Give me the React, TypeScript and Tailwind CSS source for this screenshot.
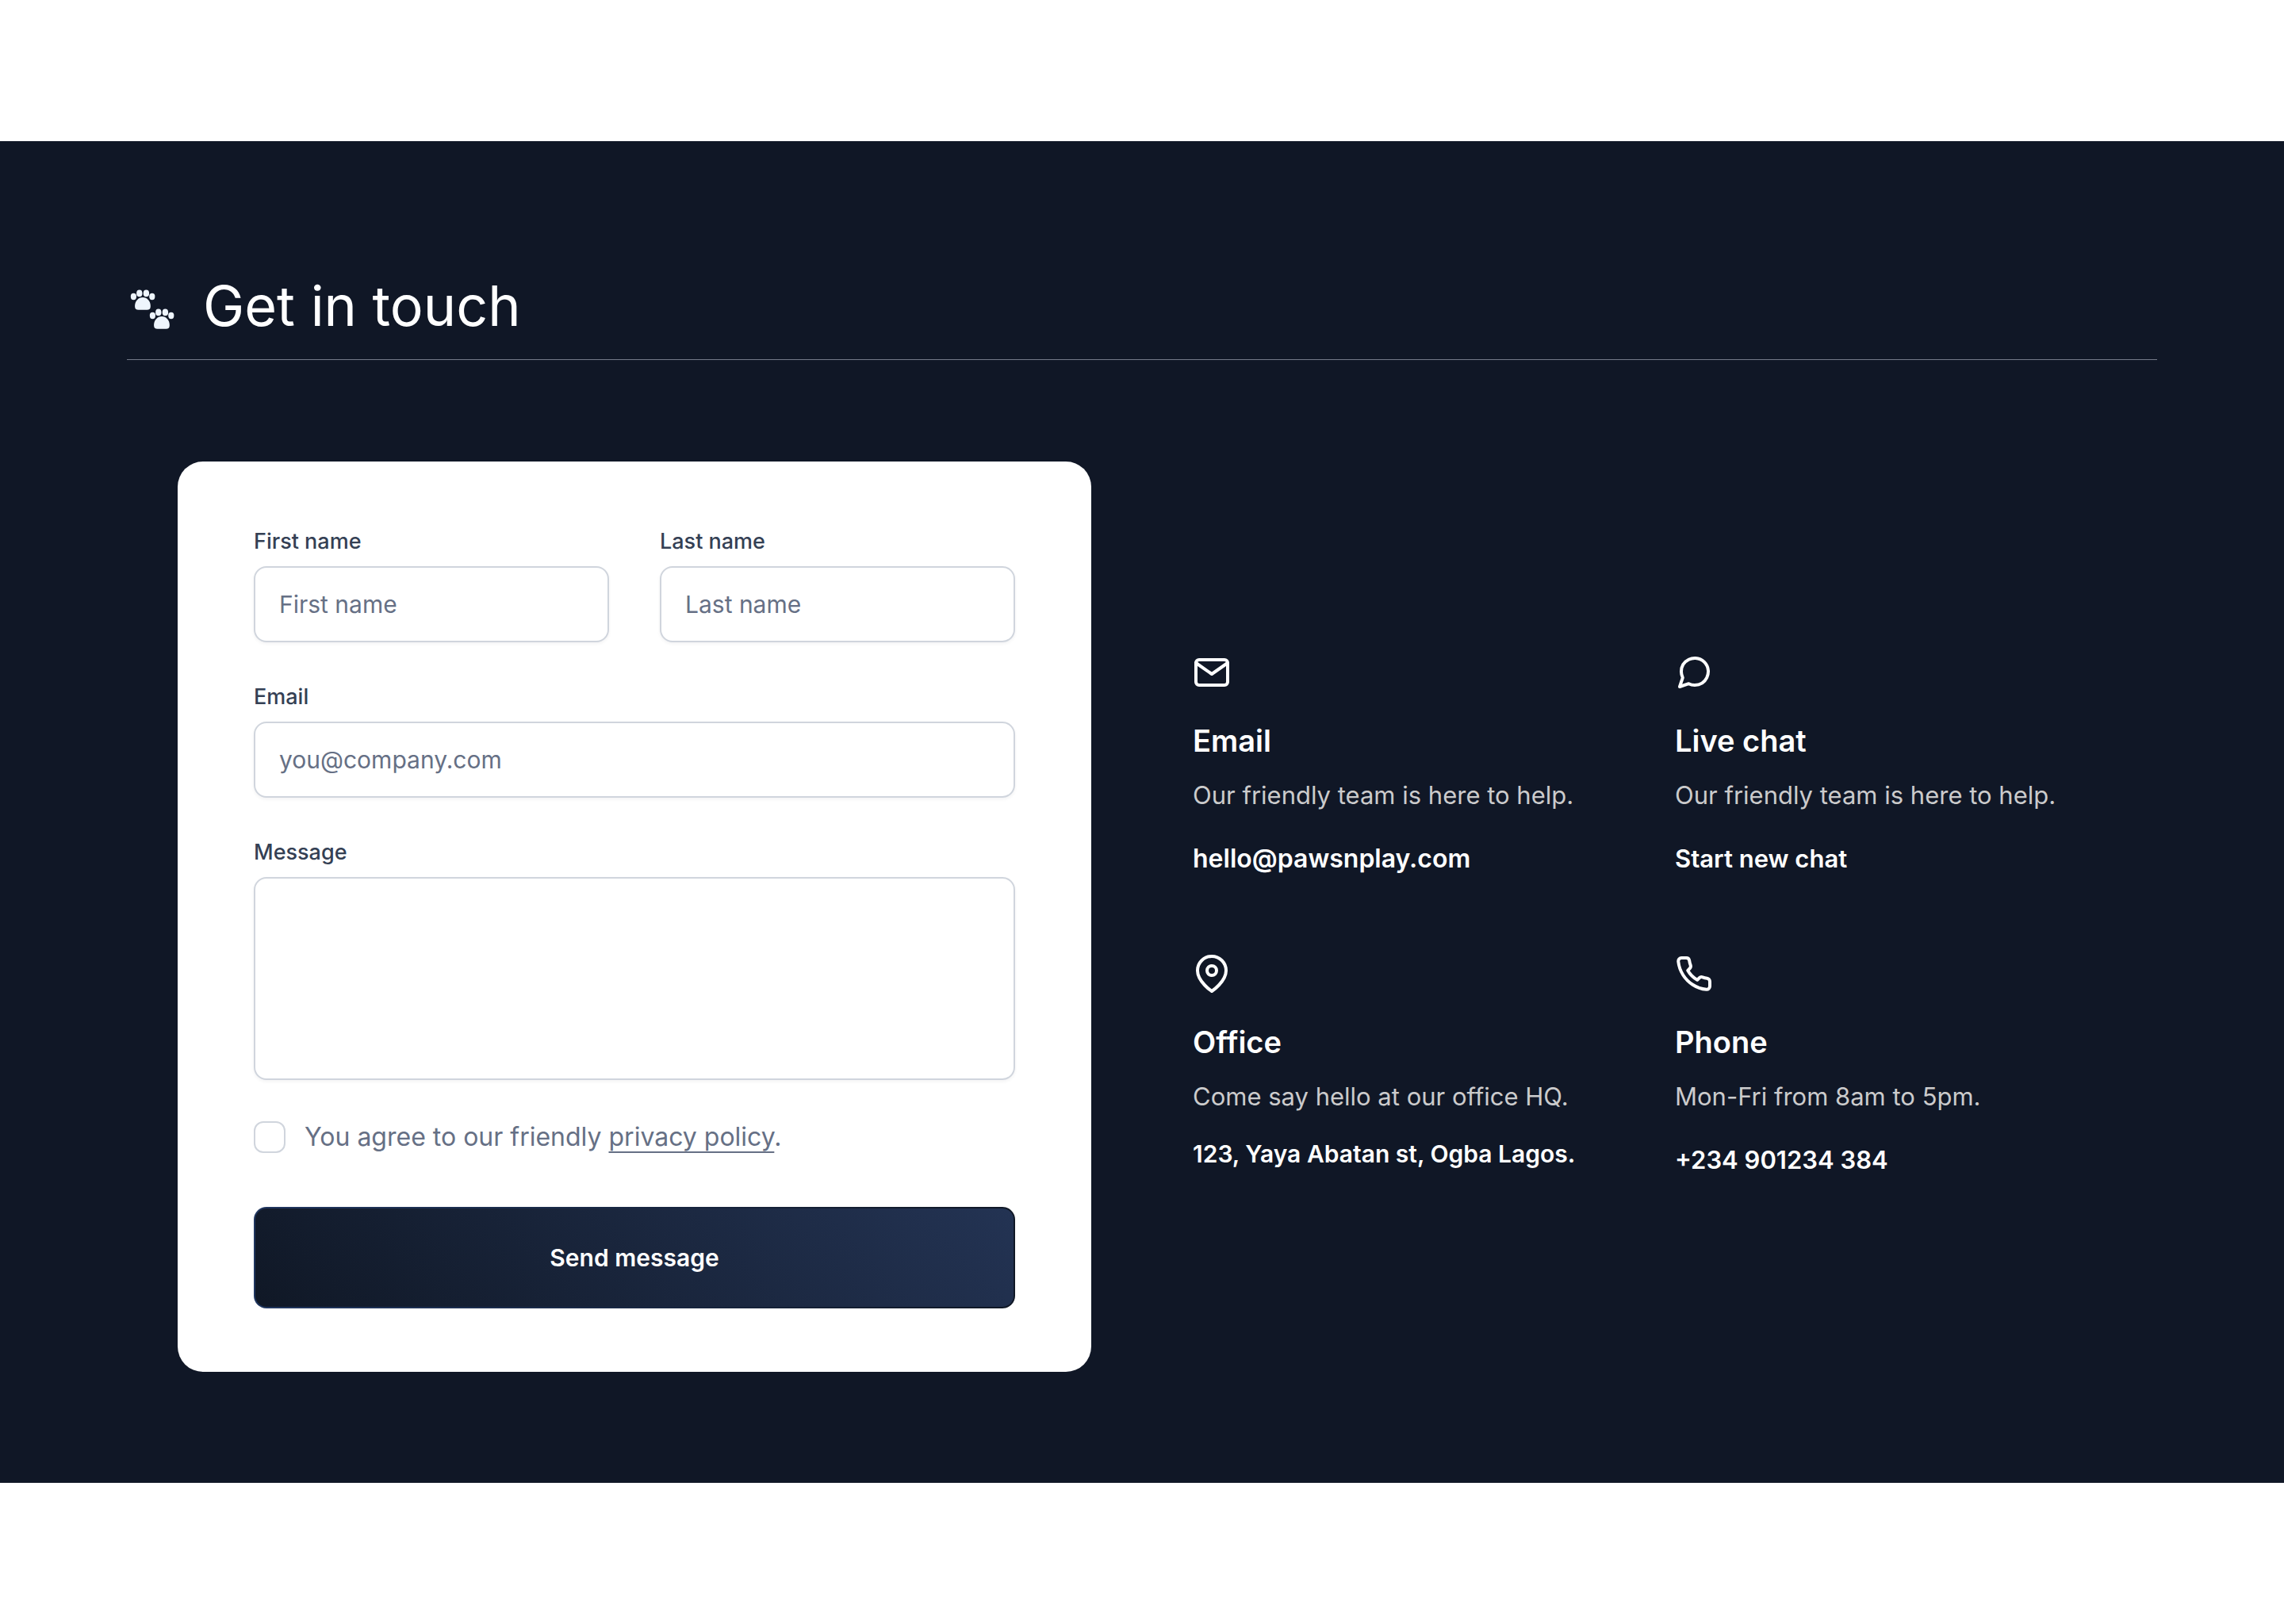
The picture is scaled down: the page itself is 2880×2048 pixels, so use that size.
import type { ReactNode } from "react";
import { FiMail, FiMapPin, FiMessageCircle, FiPhone } from "react-icons/fi";

const fieldClass =
  "block w-full rounded-2xl border-2 border-[#d0d5dd] bg-white px-[30px] text-[30px] leading-[48px] text-[#101828] placeholder:text-[#667085] placeholder:opacity-100 shadow-[0_2px_4px_rgba(16,24,40,0.05)] outline-none";

function Paws() {
  return (
    <svg viewBox="0 0 64 64" className="size-16 shrink-0 fill-[#eef5fd]" aria-hidden="true">
      {[0, 24].map((d) => (
        <g key={d} transform={`translate(${d} ${d})`}>
          <ellipse cx="8.4" cy="20" rx="3.6" ry="4.2" />
          <ellipse cx="15.8" cy="15.9" rx="3.7" ry="4.3" />
          <ellipse cx="24.4" cy="15.9" rx="3.7" ry="4.3" />
          <ellipse cx="31.8" cy="20" rx="3.6" ry="4.2" />
          <path d="M20 21c5.5 0 9.8 5 9.8 10.5v1c0 3-1.5 4.2-4.5 4.2H14.6c-3 0-4.5-1.2-4.5-4.2v-1C10.1 26 14.5 21 20 21z" />
        </g>
      ))}
    </svg>
  );
}

function Field({ id, label, children }: { id: string; label: string; children: ReactNode }) {
  return (
    <div className="flex flex-col gap-[10px]">
      <label htmlFor={id} className="text-[27px] font-medium leading-[42px] text-[#344054]">
        {label}
      </label>
      {children}
    </div>
  );
}

function Contact({
  icon,
  title,
  text,
  children,
}: {
  icon: ReactNode;
  title: string;
  text: string;
  children: ReactNode;
}) {
  return (
    <div className="flex flex-col items-start">
      {icon}
      <h3 className="mt-8 text-[38px] font-semibold leading-[60px] text-white">{title}</h3>
      <p className="mt-4 text-[31px] leading-[46px] text-[#cbcbcc]">{text}</p>
      {children}
    </div>
  );
}

export default function App() {
  return (
    <main className="flex min-h-screen flex-col justify-center bg-white font-['Inter',sans-serif]">
      <section className="bg-[#101726] px-40 pt-40 pb-[140px]">
        <header className="flex items-center gap-8 border-b border-[#747a89] pb-[19px]">
          <Paws />
          <h2 className="text-[70px] leading-[96px] text-white">Get in touch</h2>
        </header>

        <div className="mt-32 grid grid-cols-2 items-center gap-32 px-16">
          <form className="rounded-[32px] bg-white px-24 py-20" onSubmit={(e) => e.preventDefault()}>
            <div className="flex flex-col gap-12">
              <div className="grid grid-cols-2 gap-16">
                <Field id="first-name" label="First name">
                  <input id="first-name" type="text" placeholder="First name" className={`${fieldClass} h-24`} />
                </Field>
                <Field id="last-name" label="Last name">
                  <input id="last-name" type="text" placeholder="Last name" className={`${fieldClass} h-24`} />
                </Field>
              </div>
              <Field id="email" label="Email">
                <input id="email" type="email" placeholder="you@company.com" className={`${fieldClass} h-24`} />
              </Field>
              <Field id="message" label="Message">
                <textarea id="message" className={`${fieldClass} h-64 resize-none py-5`} />
              </Field>
              <div className="flex items-center gap-6">
                <input
                  id="agree"
                  type="checkbox"
                  className="size-10 shrink-0 appearance-none rounded-xl border-2 border-[#d0d5dd] bg-white checked:bg-[#22304f]"
                />
                <label htmlFor="agree" className="text-[32px] leading-[48px] text-[#667085]">
                  You agree to our friendly{" "}
                  <a
                    href="#privacy"
                    className="underline decoration-2 underline-offset-[7px] [text-decoration-skip-ink:none]"
                  >
                    privacy policy
                  </a>
                  .
                </label>
              </div>
            </div>
            <button
              type="submit"
              className="mt-16 block h-32 w-full rounded-2xl border-2 border-transparent [background:linear-gradient(45deg,#101826,#233353)_padding-box,linear-gradient(270deg,#101826,#20365f)_border-box] text-[30px] font-semibold text-white"
            >
              Send message
            </button>
          </form>

          <div className="grid grid-cols-2 gap-x-16 gap-y-24">
            <Contact
              icon={<FiMail className="size-12 text-white" />}
              title="Email"
              text="Our friendly team is here to help."
            >
              <a href="mailto:hello@pawsnplay.com" className="mt-8 text-[32px] font-semibold leading-[50px] text-white">
                hello@pawsnplay.com
              </a>
            </Contact>
            <Contact
              icon={<FiMessageCircle className="size-12 text-white" />}
              title="Live chat"
              text="Our friendly team is here to help."
            >
              <button type="button" className="mt-8 text-[31px] font-semibold leading-[50px] text-white">
                Start new chat
              </button>
            </Contact>
            <Contact
              icon={<FiMapPin className="size-12 text-white" />}
              title="Office"
              text="Come say hello at our office HQ."
            >
              <address className="mt-6 text-[30px] font-semibold not-italic leading-[50px] text-white">
                123, Yaya Abatan st, Ogba Lagos.
              </address>
            </Contact>
            <Contact
              icon={<FiPhone className="size-12 text-white" />}
              title="Phone"
              text="Mon-Fri from 8am to 5pm."
            >
              <a href="tel:+234901234384" className="mt-8 text-[31px] font-semibold leading-[50px] text-white">
                +234 901234 384
              </a>
            </Contact>
          </div>
        </div>
      </section>
    </main>
  );
}
